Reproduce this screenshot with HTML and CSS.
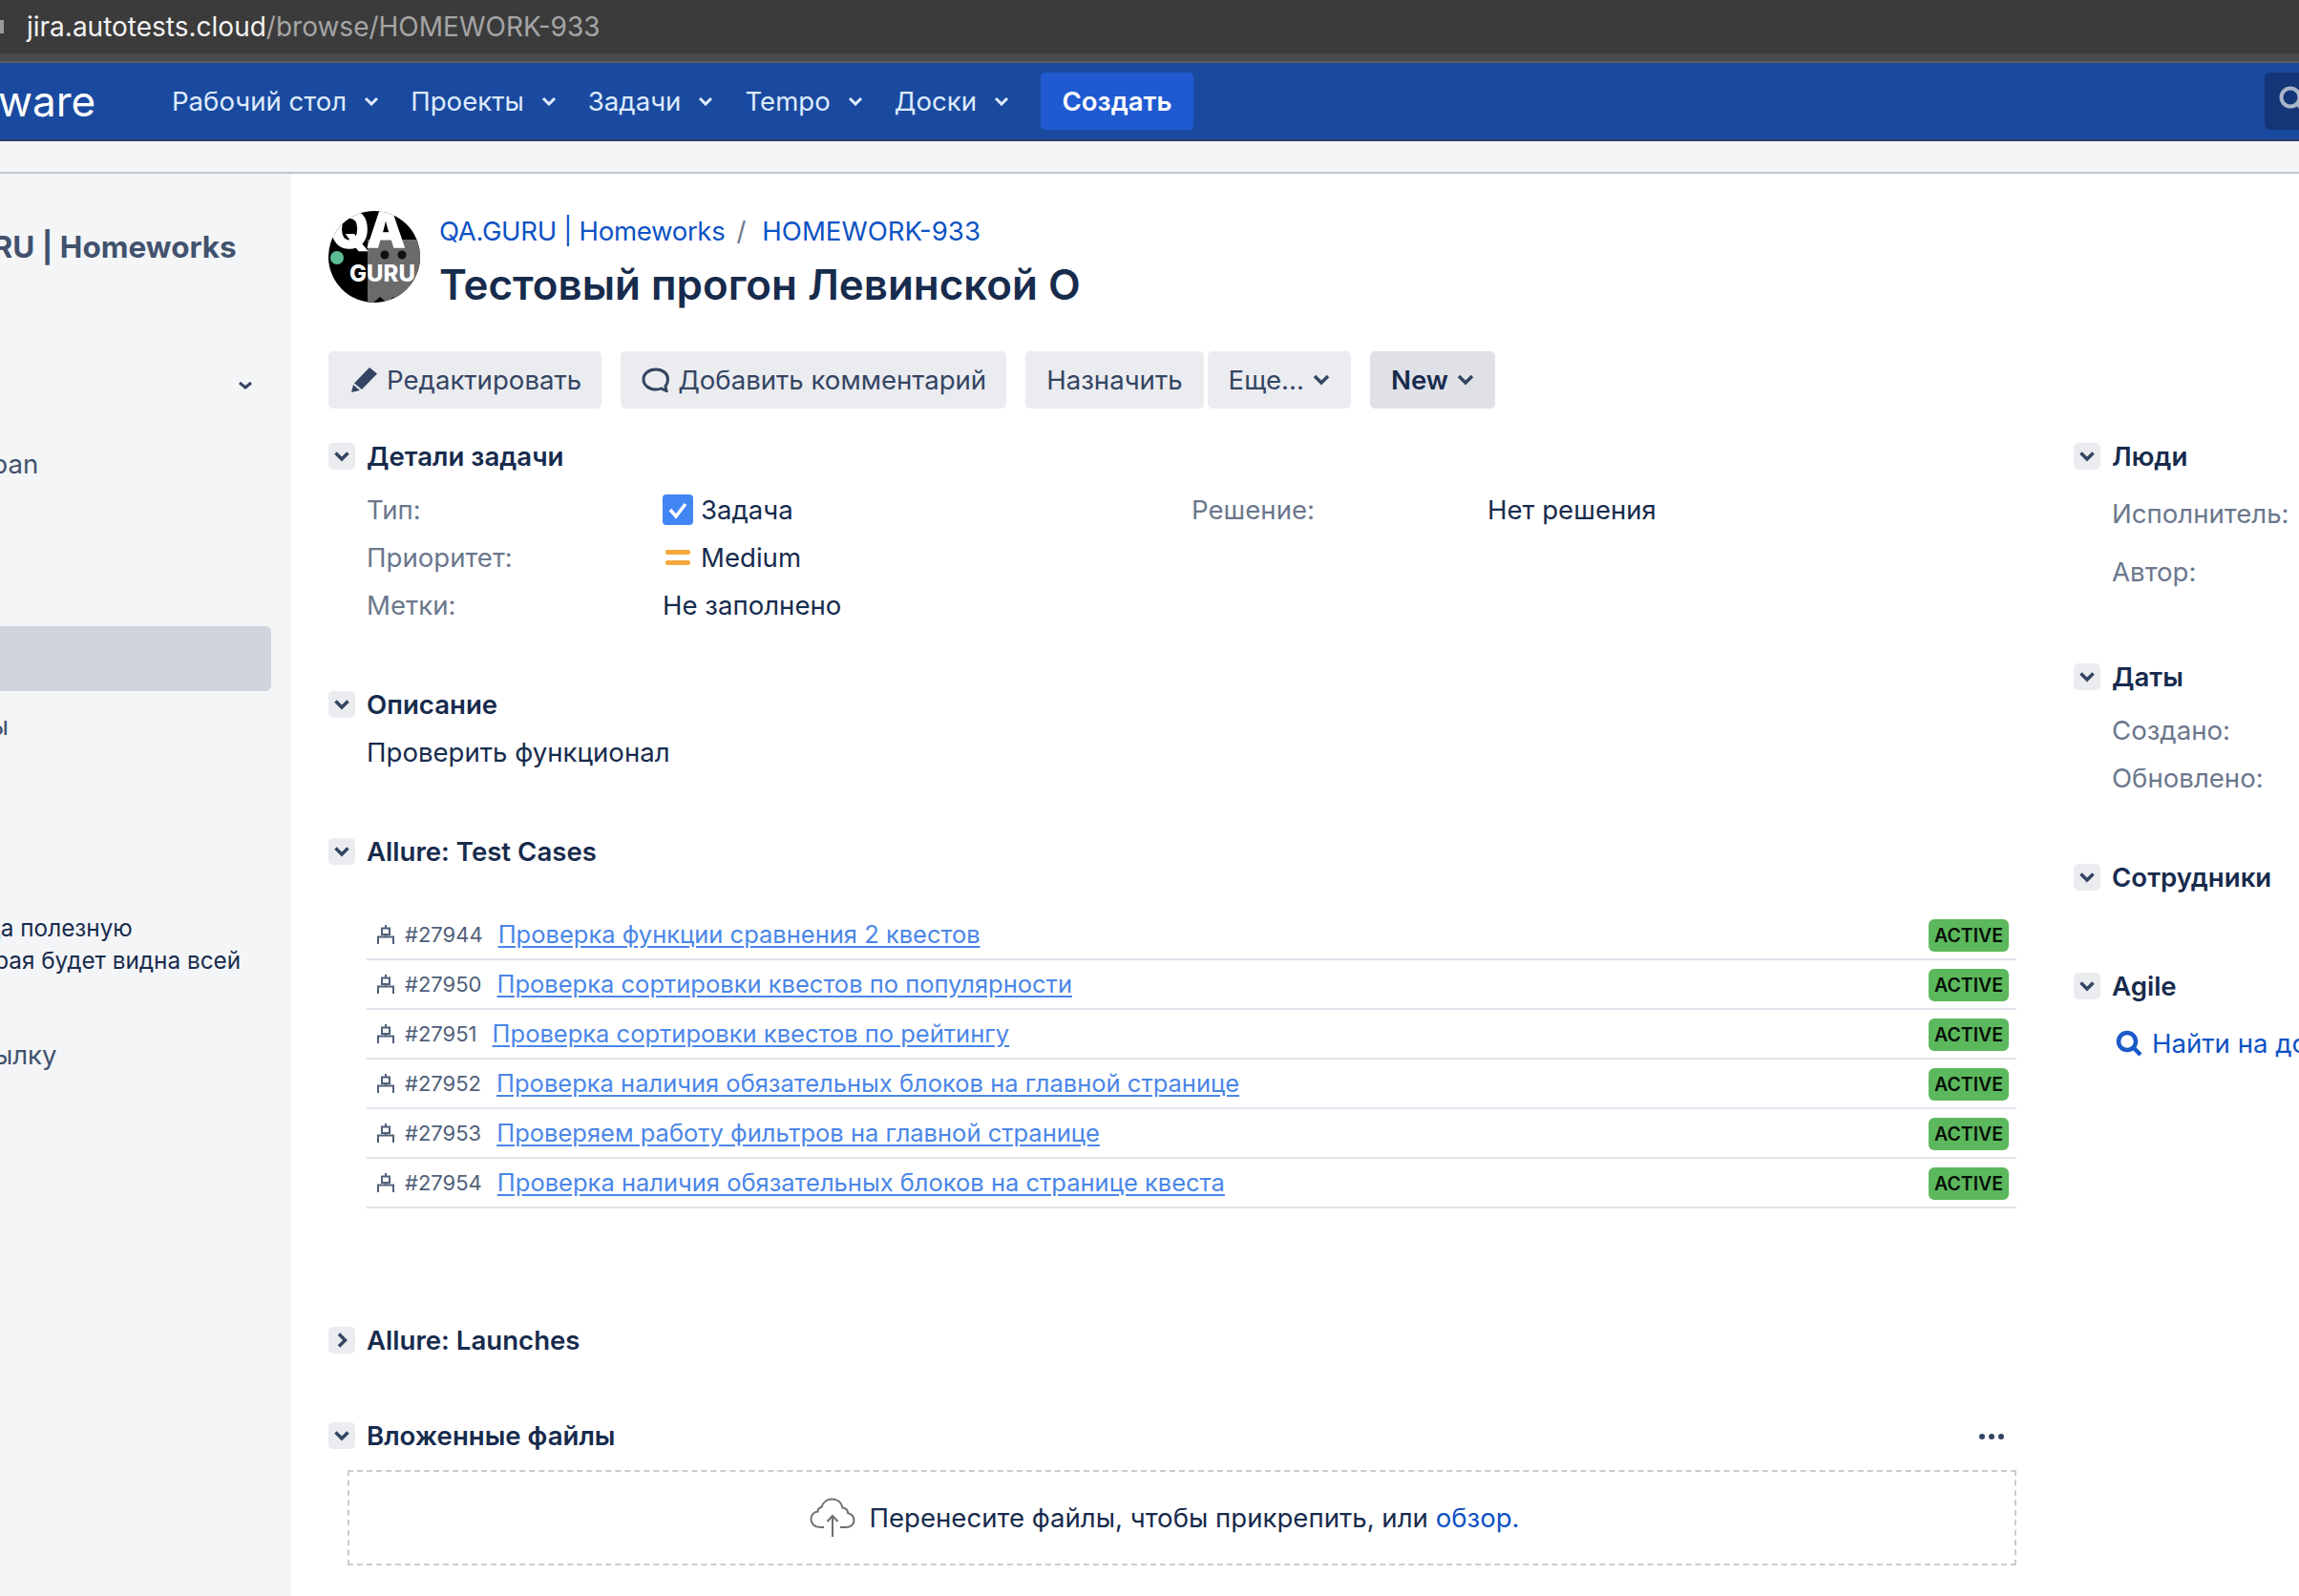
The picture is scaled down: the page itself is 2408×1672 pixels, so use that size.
FILE: index.html
```html
<!DOCTYPE html>
<html lang="en">
<head>
    <meta charset="UTF-8">
    <title>HOMEWORK-933</title>
    <link rel="stylesheet" href="styles.css">
</head>
<body>

<!-- Browser address bar -->
<div class="browser-bar">
    <span class="lock"></span>
    <span class="url"><b>jira.autotests.cloud</b>/browse/HOMEWORK-933</span>
</div>
<div class="browser-strip"></div>

<!-- Top navigation -->
<nav class="topnav">
    <span class="logo">ware</span>
    <a class="nav-item nav-first">Рабочий стол <svg class="nav-chev" viewBox="0 0 16 10"><path d="M2 2l6 6 6-6"/></svg></a>
    <a class="nav-item">Проекты <svg class="nav-chev" viewBox="0 0 16 10"><path d="M2 2l6 6 6-6"/></svg></a>
    <a class="nav-item">Задачи <svg class="nav-chev" viewBox="0 0 16 10"><path d="M2 2l6 6 6-6"/></svg></a>
    <a class="nav-item">Tempo <svg class="nav-chev" viewBox="0 0 16 10"><path d="M2 2l6 6 6-6"/></svg></a>
    <a class="nav-item">Доски <svg class="nav-chev" viewBox="0 0 16 10"><path d="M2 2l6 6 6-6"/></svg></a>
    <a class="create-btn">Создать</a>
    <div class="nav-search"><svg viewBox="0 0 36 36"><circle cx="15" cy="14" r="9.5"/><path d="M22 21l8 8"/></svg></div>
</nav>
<div class="subbar"></div>

<div class="layout">
    <!-- Sidebar, cut off by the left edge of the picture -->
    <aside class="sidebar">
        <div class="side-title">QA.GURU | Homeworks</div>
        <div class="side-chev"><svg viewBox="0 0 16 10"><path d="M2 2l6 5 6-5"/></svg></div>
        <div class="side-item side-kanban">Kanban</div>
        <div class="side-active"></div>
        <div class="side-item side-short">Тесты</div>
        <div class="side-note">
            <div class="note-one">Добавьте сюда полезную</div>
            <div class="note-two">информацию, которая будет видна всей</div>
        </div>
        <div class="side-item side-link">Добавить ссылку</div>
    </aside>

    <main class="content">
        <header class="issue-head">
            <svg class="avatar" viewBox="0 0 96 96">
                <defs><clipPath id="round"><circle cx="48" cy="48" r="48"/></clipPath></defs>
                <g clip-path="url(#round)">
                    <rect width="96" height="96" fill="#000"/>
                    <path d="M41 30h55v66H74l-6-6-7 6-7-6-7 6h-6z" fill="#6b6b6b"/>
                    <circle cx="9" cy="49" r="7" fill="#5bbd94"/>
                    <circle cx="59" cy="46" r="4.5" fill="#111"/>
                    <circle cx="77" cy="46" r="4.5" fill="#111"/>
                    <text class="avatar-qa" x="2" y="38">QA</text>
                    <text class="avatar-guru" x="22" y="74">GURU</text>
                </g>
            </svg>
            <div class="issue-title">
                <div class="crumbs"><a class="crumb-project">QA.GURU | Homeworks</a><span class="crumb-sep">/</span><a>HOMEWORK-933</a></div>
                <h1>Тестовый прогон Левинской О</h1>
            </div>
        </header>

        <div class="toolbar">
            <a class="btn btn-edit"><svg class="btn-icon" viewBox="0 0 27 26"><path d="M19 0l8 6.500-16 16.500-8-6.500zM2 18l7 6-9 2z"/></svg>Редактировать</a>
            <a class="btn btn-gap btn-comment"><svg class="btn-icon bubble" viewBox="0 0 30 26"><path d="M15 2C7.500 2 2 6.500 2 12.500S7.500 23 15 23c2 0 4-.3 5.500-1l5.500 2.500-1-5c1.800-2 2.500-4.300 2.500-7C27.500 6.500 22.500 2 15 2z"/></svg>Добавить комментарий</a>
            <a class="btn btn-gap">Назначить</a>
            <a class="btn btn-more">Еще... <svg class="chev" viewBox="0 0 18 12"><path d="M2 2l7 7 7-7"/></svg></a>
            <a class="btn btn-gap btn-status">New <svg class="chev" viewBox="0 0 18 12"><path d="M2 2l7 7 7-7"/></svg></a>
        </div>

        <div class="columns">
            <div class="main-col">
                <section class="sec-details">
                    <h3 class="sec-head"><span class="toggle"><svg viewBox="0 0 16 12"><path d="M1.500 2.500L8 9l6.500-6.500"/></svg></span>Детали задачи</h3>
                    <div class="details">
                        <div class="detail-col">
                            <div class="row"><span class="label">Тип:</span><span class="value">
                                <svg class="type-icon" viewBox="0 0 32 32"><rect width="32" height="32" rx="4" fill="#4285f4"/><path d="M8 16l6 7 10-13" fill="none" stroke="#fff" stroke-width="3.500"/></svg>Задача</span></div>
                            <div class="row"><span class="label">Приоритет:</span><span class="value">
                                <span class="prio"><i></i><i></i></span>Medium</span></div>
                            <div class="row"><span class="label">Метки:</span><span class="value">Не заполнено</span></div>
                        </div>
                        <div class="detail-col">
                            <div class="row"><span class="label">Решение:</span><span class="value">Нет решения</span></div>
                        </div>
                    </div>
                </section>

                <section class="sec-descr">
                    <h3 class="sec-head"><span class="toggle"><svg viewBox="0 0 16 12"><path d="M1.500 2.500L8 9l6.500-6.500"/></svg></span>Описание</h3>
                    <p class="descr">Проверить функционал</p>
                </section>

                <section class="sec-cases">
                    <h3 class="sec-head"><span class="toggle"><svg viewBox="0 0 16 12"><path d="M1.500 2.500L8 9l6.500-6.500"/></svg></span>Allure: Test Cases</h3>
                    <ul class="cases">
                        <li><svg class="robot" viewBox="0 0 18 20"><path d="M9 0v3M5 3.500h8v6.500H5zM7.500 6.500h.1M10.500 6.500h.1M9 10v2M1 20v-7.500h16V20"/></svg><span class="case-id">#27944</span><a class="case-link">Проверка функции сравнения 2 квестов</a><span class="badge">ACTIVE</span></li>
                        <li><svg class="robot" viewBox="0 0 18 20"><path d="M9 0v3M5 3.500h8v6.500H5zM7.500 6.500h.1M10.500 6.500h.1M9 10v2M1 20v-7.500h16V20"/></svg><span class="case-id">#27950</span><a class="case-link">Проверка сортировки квестов по популярности</a><span class="badge">ACTIVE</span></li>
                        <li><svg class="robot" viewBox="0 0 18 20"><path d="M9 0v3M5 3.500h8v6.500H5zM7.500 6.500h.1M10.500 6.500h.1M9 10v2M1 20v-7.500h16V20"/></svg><span class="case-id">#27951</span><a class="case-link">Проверка сортировки квестов по рейтингу</a><span class="badge">ACTIVE</span></li>
                        <li><svg class="robot" viewBox="0 0 18 20"><path d="M9 0v3M5 3.500h8v6.500H5zM7.500 6.500h.1M10.500 6.500h.1M9 10v2M1 20v-7.500h16V20"/></svg><span class="case-id">#27952</span><a class="case-link">Проверка наличия обязательных блоков на главной странице</a><span class="badge">ACTIVE</span></li>
                        <li><svg class="robot" viewBox="0 0 18 20"><path d="M9 0v3M5 3.500h8v6.500H5zM7.500 6.500h.1M10.500 6.500h.1M9 10v2M1 20v-7.500h16V20"/></svg><span class="case-id">#27953</span><a class="case-link">Проверяем работу фильтров на главной странице</a><span class="badge">ACTIVE</span></li>
                        <li><svg class="robot" viewBox="0 0 18 20"><path d="M9 0v3M5 3.500h8v6.500H5zM7.500 6.500h.1M10.500 6.500h.1M9 10v2M1 20v-7.500h16V20"/></svg><span class="case-id">#27954</span><a class="case-link">Проверка наличия обязательных блоков на странице квеста</a><span class="badge">ACTIVE</span></li>
                    </ul>
                </section>

                <section class="sec-launches">
                    <h3 class="sec-head"><span class="toggle"><svg viewBox="0 0 16 12"><path d="M5 -.5L11.500 6 5 12.500"/></svg></span>Allure: Launches</h3>
                </section>

                <section class="sec-files">
                    <h3 class="sec-head"><span class="toggle"><svg viewBox="0 0 16 12"><path d="M1.500 2.500L8 9l6.500-6.500"/></svg></span>Вложенные файлы<span class="dots"><i></i><i></i><i></i></span></h3>
                    <div class="dropzone">
                        <svg class="cloud" viewBox="0 0 48 42"><path d="M15 31H11C5 31 1.500 27 1.500 22.500 1.500 18 4.500 15 8.500 14.500 8.500 12 10 10.500 12.500 10 14 4.500 18.500 1.500 23.500 1.500 29.500 1.500 33.500 5.500 34.500 10.500 38 11 40 13 40 16 44 17 46.500 20 46.500 24 46.500 28 43 31 38 31H32M24 41V19M18.500 25l5.500-6 5.500 6"/></svg>
                        Перенесите файлы, чтобы прикрепить, или&nbsp;<a>обзор.</a>
                    </div>
                </section>
            </div>

            <div class="side-col">
                <section class="sec-details">
                    <h3 class="sec-head"><span class="toggle"><svg viewBox="0 0 16 12"><path d="M1.500 2.500L8 9l6.500-6.500"/></svg></span>Люди</h3>
                    <div class="people-row people-first">Исполнитель:</div>
                    <div class="people-row">Автор:</div>
                </section>
                <section class="sec-dates">
                    <h3 class="sec-head"><span class="toggle"><svg viewBox="0 0 16 12"><path d="M1.500 2.500L8 9l6.500-6.500"/></svg></span>Даты</h3>
                    <div class="date-row date-first">Создано:</div>
                    <div class="date-row">Обновлено:</div>
                </section>
                <section class="sec-staff">
                    <h3 class="sec-head"><span class="toggle"><svg viewBox="0 0 16 12"><path d="M1.500 2.500L8 9l6.500-6.500"/></svg></span>Сотрудники</h3>
                </section>
                <section class="sec-agile">
                    <h3 class="sec-head"><span class="toggle"><svg viewBox="0 0 16 12"><path d="M1.500 2.500L8 9l6.500-6.500"/></svg></span>Agile</h3>
                    <a class="board-link"><svg class="board-icon" viewBox="0 0 28 28"><circle cx="12" cy="12" r="9" /><path d="M18.500 18.500L26 26"/></svg>Найти на доске</a>
                </section>
            </div>
        </div>
    </main>
</div>

</body>
</html>
```

FILE: styles.css
```css
/* Page */
html, body {
    margin: 0;
    height: 1672px;
    overflow: hidden;
    background: #fff;
}

body {
    font-family: Inter, "Noto Sans", sans-serif;
    font-size: 27.6px;
    color: #172b4d;
}

a {
    color: inherit;
    text-decoration: none;
}

/* Browser chrome */
.browser-bar {
    height: 56px;
    background: #3b3b3b;
    display: flex;
    align-items: center;
    overflow: hidden;
}

.lock {
    width: 4px;
    height: 14px;
    margin-right: 24px;
    background: #9a9a9a;
}

.url {
    font-size: 28px;
    color: #a5a5a5;
}

.url b {
    font-weight: 400;
    color: #f2f2f2;
}

.browser-strip {
    height: 8px;
    background: #4a4a4a;
    border-bottom: 2px solid #5a5a5a;
}

/* Top navigation */
.topnav {
    height: 80px;
    background: #1a4a9f;
    border-bottom: 2px solid #2f3f66;
    display: flex;
    align-items: center;
    color: #deebff;
    overflow: hidden;
}

.logo {
    margin-left: -2px;
    width: 138px;
    font-size: 44px;
    color: #fff;
}

.nav-item {
    display: flex;
    align-items: center;
    gap: 18px;
    margin-right: 33px;
    white-space: nowrap;
}

.nav-first {
    margin-left: 44px;
}

.nav-chev {
    width: 16px;
    height: 10px;
    fill: none;
    stroke: #deebff;
    stroke-width: 3;
}

.create-btn {
    width: 160px;
    height: 60px;
    margin-left: 0;
    border-radius: 5px;
    background: #1f5ad1;
    color: #fff;
    font-weight: 600;
    display: flex;
    align-items: center;
    justify-content: center;
}

.nav-search {
    width: 60px;
    height: 60px;
    margin-left: auto;
    margin-right: -24px;
    border-radius: 6px 0 0 6px;
    background: #143576;
}

.nav-search svg {
    width: 36px;
    height: 36px;
    margin: 12px 0 0 12px;
    fill: none;
    stroke: #a9b4c9;
    stroke-width: 4;
}

.subbar {
    height: 32px;
    background: #f4f5f7;
    border-bottom: 2px solid #c1c7d0;
}

.layout {
    display: flex;
    height: 1490px;
}

/* Sidebar */
.sidebar {
    width: 305px;
    flex-shrink: 0;
    background: #f4f5f7;
    color: #42526e;
    overflow: hidden;
    white-space: nowrap;
}

.side-title {
    margin: 56px 0 0 -110px;
    font-size: 31.5px;
    line-height: 42px;
    font-weight: 700;
}

.side-chev {
    margin: 119px 0 0 249px;
    height: 12px;
}

.side-chev svg {
    display: block;
    width: 16px;
    height: 10px;
    fill: none;
    stroke: #344563;
    stroke-width: 3;
}

.side-item {
    line-height: 36px;
}

.side-kanban {
    margin: 57px 0 0 -59px;
}

.side-active {
    width: 284px;
    height: 68px;
    margin-top: 152px;
    border-radius: 0 6px 6px 0;
    background: #d1d4dd;
}

.side-short {
    margin: 18px 0 0 -72px;
}

.side-note {
    margin: 177px 0 0 0;
    font-size: 24.3px;
    line-height: 34px;
    color: #172b4d;
}

.note-one {
    margin-left: -170px;
}

.note-two {
    margin-left: -229px;
}

.side-link {
    margin: 64px 0 0 -178px;
}

/* Issue header */
.content {
    flex: 1;
    padding: 39px 0 0 39px;
    min-width: 0;
}

.issue-head {
    display: flex;
    gap: 20px;
}

.avatar {
    width: 96px;
    height: 96px;
    flex-shrink: 0;
}

.avatar-qa {
    font-family: Inter, sans-serif;
    font-size: 52px;
    font-weight: 800;
    fill: #fff;
    stroke: #fff;
    stroke-width: 1.5;
}

.avatar-guru {
    font-family: Inter, sans-serif;
    font-size: 24px;
    font-weight: 800;
    fill: #fff;
}

.crumbs {
    margin-top: 1px;
    line-height: 40px;
    color: #0d52c4;
}

.crumb-project {
    letter-spacing: -.35px;
}

.crumb-sep {
    margin: 0 17px 0 12px;
    color: #6b778c;
}

h1 {
    margin: 8px 0 0;
    font-size: 43.9px;
    line-height: 56px;
    font-weight: 600;
}

/* Buttons */
.toolbar {
    display: flex;
    margin-top: 42px;
}

.btn {
    display: flex;
    align-items: center;
    height: 60px;
    padding: 0 22px;
    border-radius: 5px;
    background: #ebecf0;
    color: #344563;
    white-space: nowrap;
}

.btn-edit {
    padding-left: 24px;
    padding-right: 21px;
}

.btn-comment {
    padding-right: 21px;
}

.btn-gap {
    margin-left: 20px;
}

.btn-more {
    margin-left: 4px;
}

.btn-status {
    background: #dfe1e6;
    color: #172b4d;
    font-weight: 600;
}

.btn-icon {
    width: 27px;
    height: 26px;
    margin-right: 10px;
    fill: #344563;
}

.bubble {
    width: 30px;
    fill: none;
    stroke: #344563;
    stroke-width: 3;
    margin-right: 8px;
}

.chev {
    width: 18px;
    height: 12px;
    margin-left: 9px;
    fill: none;
    stroke: #344563;
    stroke-width: 3.5;
}

/* Columns under the toolbar */
.columns {
    display: flex;
}

.main-col {
    width: 1768px;
    flex-shrink: 0;
}

.side-col {
    margin-left: 60px;
    white-space: nowrap;
}

.sec-head {
    display: flex;
    align-items: center;
    gap: 12px;
    height: 28px;
    margin: 0;
    font-size: 27.6px;
    font-weight: 600;
}

.toggle {
    width: 28px;
    height: 28px;
    border-radius: 5px;
    background: #ebecf0;
    display: flex;
    align-items: center;
    justify-content: center;
}

.toggle svg {
    width: 16px;
    height: 12px;
    fill: none;
    stroke: #344563;
    stroke-width: 3.5;
    overflow: visible;
}

/* Sections */
.sec-details {
    margin-top: 36px;
}

.details {
    display: flex;
    margin: 17px 0 0 40px;
}

.detail-col {
    width: 864px;
}

.row {
    display: flex;
    align-items: center;
    height: 50px;
}

.label {
    width: 310px;
    color: #6b778c;
}

.value {
    display: flex;
    align-items: center;
}

.type-icon {
    width: 32px;
    height: 32px;
    margin-right: 8px;
}

.prio {
    width: 26px;
    margin: 0 11px 0 3px;
}

.prio i {
    display: block;
    height: 5px;
    border-radius: 2px;
    background: #f5a93b;
}

.prio i + i {
    margin-top: 6px;
}

.sec-descr {
    margin-top: 65px;
}

.descr {
    margin: 11px 0 0 40px;
    line-height: 50px;
}

.sec-cases {
    margin-top: 65px;
}

.cases {
    list-style: none;
    margin: 48px 0 0 40px;
    padding: 0;
}

.cases li {
    display: flex;
    align-items: center;
    height: 50px;
    border-bottom: 2px solid #dfe3eb;
}

.robot {
    width: 18px;
    height: 20px;
    margin-left: 11px;
    fill: none;
    stroke: #505f79;
    stroke-width: 2;
}

.case-id {
    margin-left: 11px;
    font-size: 22px;
    color: #505f79;
}

.case-link {
    margin: 0 0 2px 16px;
    font-size: 25.5px;
    color: #4a86e8;
    text-decoration: underline;
    text-underline-offset: 3px;
}

.badge {
    width: 84px;
    height: 34px;
    margin: 2px 8px 0 auto;
    border-radius: 6px;
    background: #5cb85c;
    color: #071007;
    font-size: 19.5px;
    font-weight: 600;
    display: flex;
    align-items: center;
    justify-content: center;
}

.sec-launches {
    margin-top: 124px;
}

.sec-files {
    margin-top: 72px;
}

.dots {
    display: flex;
    gap: 4px;
    margin: 2px 13px 0 auto;
}

.dots i {
    width: 6px;
    height: 6px;
    border-radius: 50%;
    background: #344563;
}

.dropzone {
    height: 96px;
    margin: 22px 0 0 20px;
    padding-right: 36px;
    border: 2px dashed #ccc;
    display: flex;
    align-items: center;
    justify-content: center;
}

.dropzone a {
    color: #0d52c4;
}

.cloud {
    width: 48px;
    height: 42px;
    margin-right: 14px;
    fill: none;
    stroke: #6f6f6f;
    stroke-width: 2;
}

/* Right column */
.people-row, .date-row {
    margin-left: 40px;
    color: #6b778c;
    line-height: 36px;
}

.people-first {
    margin-top: 28px;
}

.people-row + .people-row {
    margin-top: 25px;
}

.sec-dates {
    margin-top: 78px;
}

.date-first {
    margin-top: 24px;
}

.date-row + .date-row {
    margin-top: 14px;
}

.sec-staff {
    margin-top: 72px;
}

.sec-agile {
    margin-top: 86px;
}

.board-link {
    display: flex;
    align-items: center;
    margin: 29px 0 0 44px;
    color: #0d52c4;
}

.board-icon {
    width: 28px;
    height: 28px;
    margin-right: 10px;
    fill: none;
    stroke: #1b5ac8;
    stroke-width: 4.5;
}
```
